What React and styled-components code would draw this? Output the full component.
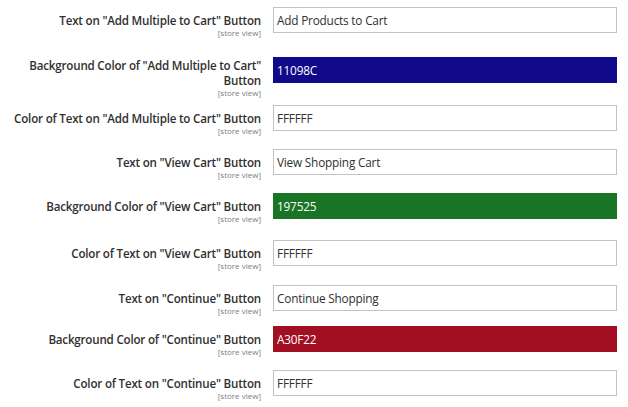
import styled, { createGlobalStyle } from "styled-components";

const GlobalStyle = createGlobalStyle`
  html, body {
    margin: 0;
    padding: 0;
    background: #ffffff;
  }
  body {
    font-family: "Open Sans", "Liberation Sans", sans-serif;
    color: #303030;
  }
`;

const fields = [
  { label: 'Text on "Add Multiple to Cart" Button', value: "Add Products to Cart", h: 50 },
  { label: 'Background Color of "Add Multiple to Cart" Button', value: "11098C", bg: "#11098C", h: 48, multi: true },
  { label: 'Color of Text on "Add Multiple to Cart" Button', value: "FFFFFF", h: 44 },
  { label: 'Text on "View Cart" Button', value: "View Shopping Cart", h: 44 },
  { label: 'Background Color of "View Cart" Button', value: "197525", bg: "#197525", h: 47 },
  { label: 'Color of Text on "View Cart" Button', value: "FFFFFF", h: 45 },
  { label: 'Text on "Continue" Button', value: "Continue Shopping", h: 41 },
  { label: 'Background Color of "Continue" Button', value: "A30F22", bg: "#A30F22", h: 44 },
  { label: 'Color of Text on "Continue" Button', value: "FFFFFF", h: 37 },
];

function App() {
  return (
    <Page>
      <GlobalStyle />
      {fields.map((f) => (
        <Row key={f.label} $h={f.h}>
          <LabelCol $multi={f.multi}>
            <Label>{f.label}</Label>
            <Scope>[store view]</Scope>
          </LabelCol>
          <Field type="text" readOnly value={f.value} $bg={f.bg} />
        </Row>
      ))}
    </Page>
  );
}

const Page = styled.div`
  display: flex;
  flex-direction: column;
  width: 628px;
  height: 407px;
  padding-top: 7px;
  box-sizing: border-box;
  overflow: hidden;
`;

const Row = styled.div`
  display: flex;
  align-items: flex-start;
  height: ${(p) => p.$h}px;
  flex-shrink: 0;
`;

const LabelCol = styled.div`
  display: flex;
  flex-direction: column;
  align-items: flex-end;
  width: 256px;
  margin-left: 5px;
  margin-right: 12px;
  padding-top: ${(p) => (p.$multi ? 1 : 6)}px;
  text-align: right;
`;

const Label = styled.div`
  font-size: 11.6px;
  font-weight: 600;
  letter-spacing: -0.2px;
  line-height: 15px;
  color: #303030;
`;

const Scope = styled.div`
  font-size: 8px;
  line-height: 9px;
  color: #7d7d7d;
`;

const Field = styled.input`
  width: 344px;
  height: 26px;
  box-sizing: border-box;
  margin: 0;
  padding: 0 3px;
  border: 1px solid ${(p) => (p.$bg ? p.$bg : "#c2c2c2")};
  background: ${(p) => p.$bg || "#ffffff"};
  color: ${(p) => (p.$bg ? "#ffffff" : "#303030")};
  font-family: "Open Sans", "Liberation Sans", sans-serif;
  font-size: 11.8px;
  letter-spacing: -0.2px;
  outline: none;
`;

export default App;
